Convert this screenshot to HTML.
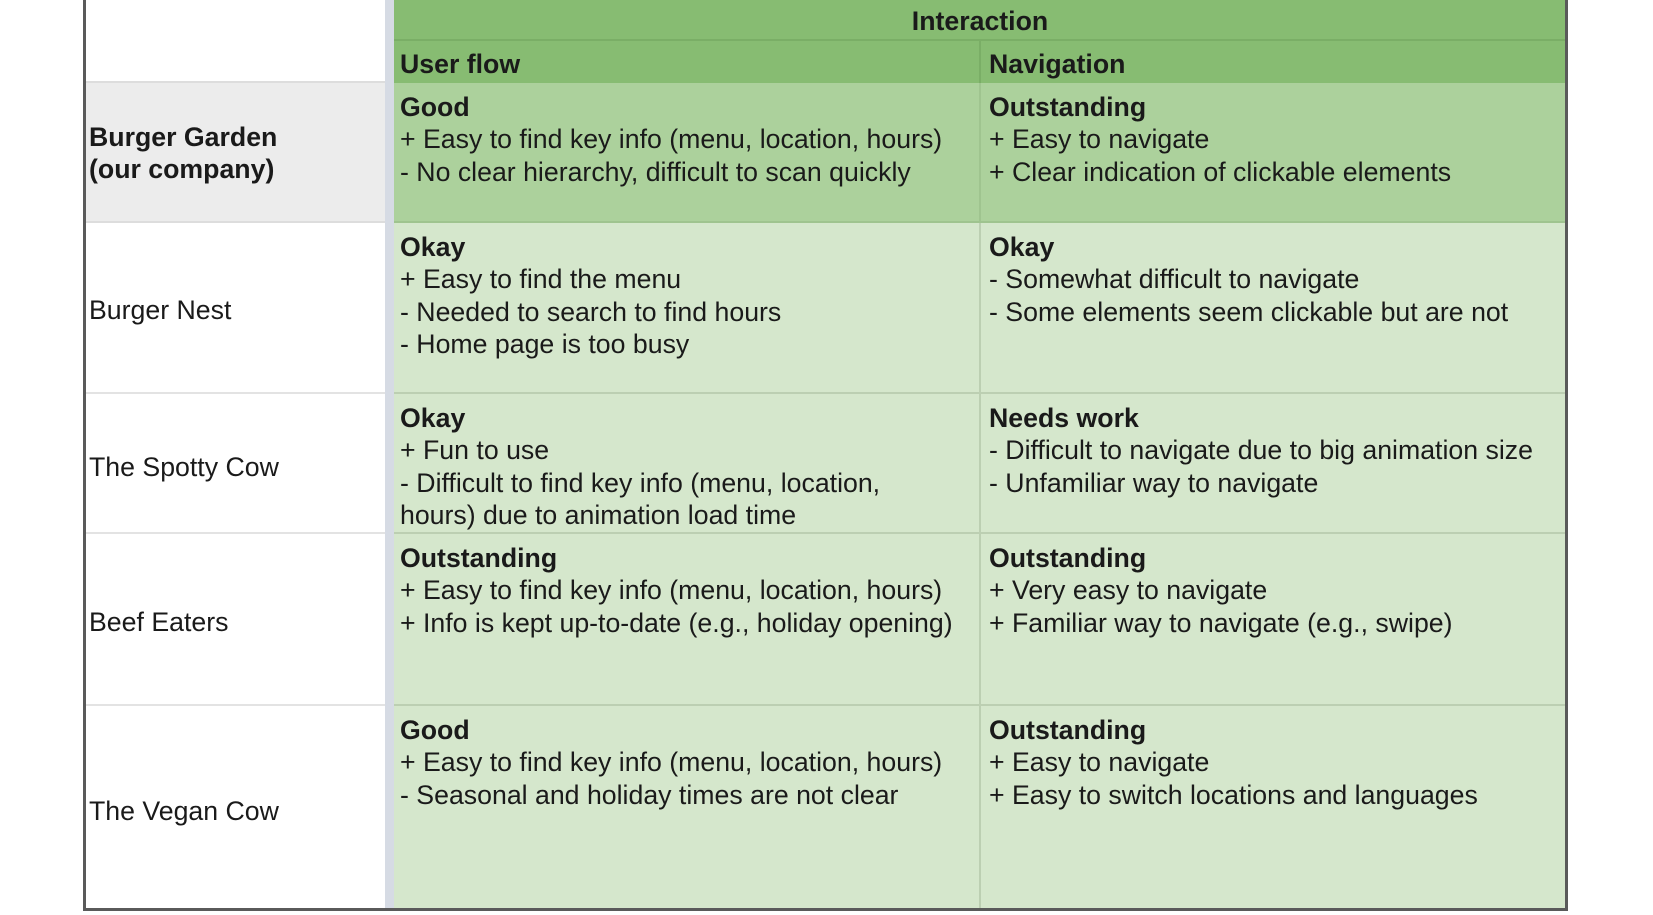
<!DOCTYPE html>
<html><head><meta charset="utf-8"><style>
body{margin:0;width:1653px;height:915px;background:#fff;position:relative;overflow:hidden;font-family:"Liberation Sans",sans-serif;color:#1a1a1a;}
.c{position:absolute;box-sizing:border-box;font-size:26.7px;line-height:32.3px;white-space:nowrap;}
b{font-weight:bold;}
.frame{position:absolute;left:83px;top:-3px;width:1485px;height:914px;border:3px solid #5a5a5a;box-sizing:border-box;}
</style></head><body>
<div class="c" style="left:86px;top:0;width:299px;height:83px;background:#fff;border-bottom:2px solid #ddd"></div>
<div class="c" style="left:86px;top:83px;width:299px;height:140px;background:#ececec;border-bottom:2px solid #ddd;padding:38px 0 0 3px"><b>Burger Garden<br>(our company)</b></div>
<div class="c" style="left:86px;top:223px;width:299px;height:171px;border-bottom:2px solid #e3e3e3;padding:71px 0 0 3px">Burger Nest</div>
<div class="c" style="left:86px;top:394px;width:299px;height:140px;border-bottom:2px solid #e3e3e3;padding:57px 0 0 3px">The Spotty Cow</div>
<div class="c" style="left:86px;top:534px;width:299px;height:172px;border-bottom:2px solid #e3e3e3;padding:72px 0 0 3px">Beef Eaters</div>
<div class="c" style="left:86px;top:706px;width:299px;height:205px;padding:89px 0 0 3px">The Vegan Cow</div>
<div class="c" style="left:385px;top:0;width:9px;height:911px;background:#d6dbe4"></div>
<div class="c" style="left:394px;top:0;width:1172px;height:41px;background:#87bc72;border-bottom:2px solid #7aae66;text-align:center;padding-top:5px"><b>Interaction</b></div>
<div class="c" style="left:394px;top:41px;width:587px;height:42px;background:#87bc72;border-right:2px solid #7aae66;padding:7px 0 0 6px"><b>User flow</b></div>
<div class="c" style="left:981px;top:41px;width:585px;height:42px;background:#87bc72;padding:7px 0 0 8px"><b>Navigation</b></div>
<div class="c" style="left:394px;top:83px;width:587px;height:140px;background:#acd19c;border-right:2px solid #9fc48f;border-bottom:2px solid #9fc48f;padding:8px 0 0 6px"><b>Good</b><br>+ Easy to find key info (menu, location, hours)<br>- No clear hierarchy, difficult to scan quickly</div>
<div class="c" style="left:981px;top:83px;width:585px;height:140px;background:#acd19c;border-bottom:2px solid #9fc48f;padding:8px 0 0 8px"><b>Outstanding</b><br>+ Easy to navigate<br>+ Clear indication of clickable elements</div>
<div class="c" style="left:394px;top:223px;width:587px;height:171px;background:#d5e7cc;border-right:2px solid #bccfb2;border-bottom:2px solid #bccfb2;padding:8px 0 0 6px"><b>Okay</b><br>+ Easy to find the menu<br>- Needed to search to find hours<br>- Home page is too busy</div>
<div class="c" style="left:981px;top:223px;width:585px;height:171px;background:#d5e7cc;border-bottom:2px solid #bccfb2;padding:8px 0 0 8px"><b>Okay</b><br>- Somewhat difficult to navigate<br>- Some elements seem clickable but are not</div>
<div class="c" style="left:394px;top:394px;width:587px;height:140px;background:#d5e7cc;border-right:2px solid #bccfb2;border-bottom:2px solid #bccfb2;padding:8px 0 0 6px"><b>Okay</b><br>+ Fun to use<br>- Difficult to find key info (menu, location,<br>hours) due to animation load time</div>
<div class="c" style="left:981px;top:394px;width:585px;height:140px;background:#d5e7cc;border-bottom:2px solid #bccfb2;padding:8px 0 0 8px"><b>Needs work</b><br>- Difficult to navigate due to big animation size<br>- Unfamiliar way to navigate</div>
<div class="c" style="left:394px;top:534px;width:587px;height:172px;background:#d5e7cc;border-right:2px solid #bccfb2;border-bottom:2px solid #bccfb2;padding:8px 0 0 6px"><b>Outstanding</b><br>+ Easy to find key info (menu, location, hours)<br>+ Info is kept up-to-date (e.g., holiday opening)</div>
<div class="c" style="left:981px;top:534px;width:585px;height:172px;background:#d5e7cc;border-bottom:2px solid #bccfb2;padding:8px 0 0 8px"><b>Outstanding</b><br>+ Very easy to navigate<br>+ Familiar way to navigate (e.g., swipe)</div>
<div class="c" style="left:394px;top:706px;width:587px;height:205px;background:#d5e7cc;border-right:2px solid #bccfb2;padding:8px 0 0 6px"><b>Good</b><br>+ Easy to find key info (menu, location, hours)<br>- Seasonal and holiday times are not clear</div>
<div class="c" style="left:981px;top:706px;width:585px;height:205px;background:#d5e7cc;padding:8px 0 0 8px"><b>Outstanding</b><br>+ Easy to navigate<br>+ Easy to switch locations and languages</div>
<div class="frame"></div>
</body></html>
